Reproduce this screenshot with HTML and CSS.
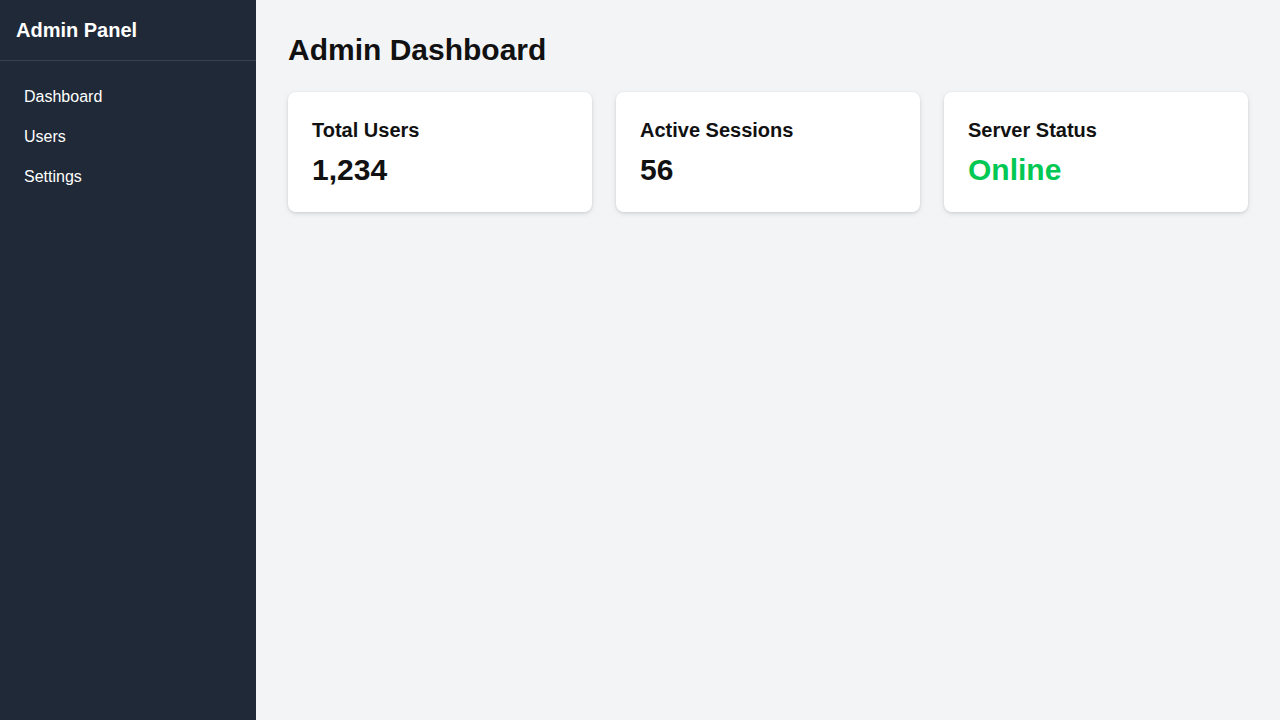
FILE: index.html
```html
<!DOCTYPE html>
<html lang="en">
<head>
<meta charset="utf-8">
<title>Admin Panel</title>
<link rel="stylesheet" href="styles.css">
</head>
<body>
<div class="layout">
  <aside class="sidebar">
    <div class="brand">Admin Panel</div>
    <nav class="nav">
      <a class="nav-item" href="#">Dashboard</a>
      <a class="nav-item" href="#">Users</a>
      <a class="nav-item" href="#">Settings</a>
    </nav>
  </aside>
  <main class="main">
    <h1 class="title">Admin Dashboard</h1>
    <div class="cards">
      <div class="card">
        <h3 class="card-title">Total Users</h3>
        <div class="card-value">1,234</div>
      </div>
      <div class="card">
        <h3 class="card-title">Active Sessions</h3>
        <div class="card-value">56</div>
      </div>
      <div class="card">
        <h3 class="card-title">Server Status</h3>
        <div class="card-value online">Online</div>
      </div>
    </div>
  </main>
</div>
</body>
</html>
```

FILE: styles.css
```css
* { box-sizing: border-box; }
html, body { margin: 0; padding: 0; height: 100%; }
body {
  font-family: "Liberation Sans", Arial, sans-serif;
  background: #f3f4f6;
  color: #111111;
}
.layout { display: flex; min-height: 100vh; }
.sidebar {
  width: 256px;
  flex-shrink: 0;
  background: #1f2937;
  color: #ffffff;
}
.brand {
  font-size: 20px;
  font-weight: 700;
  line-height: 28px;
  padding: 16px;
  height: 61px;
  border-bottom: 1px solid #374151;
}
.nav {
  display: flex;
  flex-direction: column;
  padding: 16px 8px;
}
.nav-item {
  color: #ffffff;
  text-decoration: none;
  font-size: 16px;
  line-height: 24px;
  padding: 8px 16px;
}
.main {
  flex: 1;
  padding: 32px;
}
.title {
  margin: 0 0 24px;
  font-size: 30px;
  line-height: 36px;
  font-weight: 700;
  color: #111111;
}
.cards {
  display: grid;
  grid-template-columns: repeat(3, 1fr);
  gap: 24px;
}
.card {
  background: #ffffff;
  border-radius: 8px;
  padding: 24px;
  height: 120px;
  box-shadow: 0 1px 3px rgba(0,0,0,0.1), 0 2px 6px rgba(0,0,0,0.08);
}
.card-title {
  margin: 0 0 8px;
  font-size: 20px;
  line-height: 28px;
  font-weight: 700;
  color: #111111;
}
.card-value {
  font-size: 30px;
  line-height: 36px;
  font-weight: 700;
  color: #111111;
}
.card-value.online { color: #00c853; }
```
